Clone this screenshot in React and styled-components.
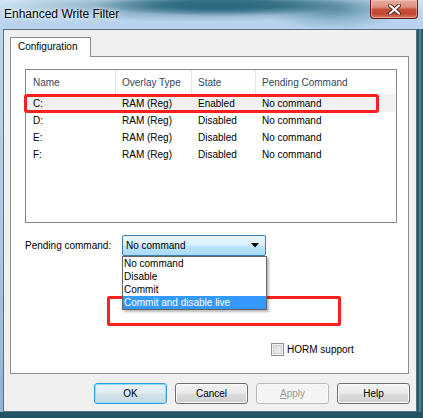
import styled, { createGlobalStyle } from "styled-components";

const Global = createGlobalStyle`
  html, body {
    margin: 0;
    padding: 0;
    background: #ffffff;
  }
  body {
    font-family: "Liberation Sans", Arial, sans-serif;
    font-size: 10px;
    color: #000;
  }
`;

const rows = [
  { name: "C:", type: "RAM (Reg)", state: "Enabled", cmd: "No command", selected: true },
  { name: "D:", type: "RAM (Reg)", state: "Disabled", cmd: "No command" },
  { name: "E:", type: "RAM (Reg)", state: "Disabled", cmd: "No command" },
  { name: "F:", type: "RAM (Reg)", state: "Disabled", cmd: "No command" },
];

const options = ["No command", "Disable", "Commit", "Commit and disable live"];

const App = () => {
  return (
    <>
      <Global />
      <Window>
        <TitleBar>
          <Title>Enhanced Write Filter</Title>
          <CloseButton>
            <svg width="13" height="11" viewBox="0 0 13 11">
              <path d="M2 1.5 L11 9.5 M11 1.5 L2 9.5" stroke="#4a2a26" strokeWidth="4" strokeLinecap="round" />
              <path d="M2 1.5 L11 9.5 M11 1.5 L2 9.5" stroke="#ffffff" strokeWidth="2.2" strokeLinecap="round" />
            </svg>
          </CloseButton>
        </TitleBar>

        <Client>
          <TabStrip>
            <Tab>Configuration</Tab>
          </TabStrip>
          <Panel>
            <ListView>
              <HeaderRow>
                <HeaderCell>Name</HeaderCell>
                <HeaderCell>Overlay Type</HeaderCell>
                <HeaderCell>State</HeaderCell>
                <HeaderCell last>Pending Command</HeaderCell>
              </HeaderRow>
              {rows.map((r, i) => (
                <Row key={`row-${i}`} selected={r.selected}>
                  <Cell>{r.name}</Cell>
                  <Cell>{r.type}</Cell>
                  <Cell>{r.state}</Cell>
                  <Cell>{r.cmd}</Cell>
                  {r.selected && <RowMark />}
                </Row>
              ))}
            </ListView>

            <PendingRow>
              <Label>Pending command:</Label>
              <Combo>
                <ComboText>No command</ComboText>
                <svg width="8" height="5" viewBox="0 0 8 5">
                  <polygon points="0,0 8,0 4,4.5" fill="#000" />
                </svg>
                <DropList>
                  {options.map((o, i) => (
                    <DropItem key={`opt-${i}`} active={i === options.length - 1}>
                      {o}
                    </DropItem>
                  ))}
                </DropList>
                <OptionMark />
              </Combo>
            </PendingRow>

            <CheckRow>
              <CheckBox />
              <span>HORM support</span>
            </CheckRow>
          </Panel>

          <ButtonRow>
            <Button variant="default">OK</Button>
            <Button>Cancel</Button>
            <Button variant="disabled">
              <u>A</u>pply
            </Button>
            <Button>Help</Button>
          </ButtonRow>
        </Client>
      </Window>
    </>
  );
};
export default App;

const Window = styled.div`
  width: 423px;
  height: 418px;
  display: flex;
  flex-direction: column;
  box-sizing: border-box;
  padding: 0 6px 6px 3px;
  background:
    linear-gradient(#1f5566, #1f5566) left bottom / 100% 6px no-repeat,
    linear-gradient(90deg, #274f5e 0, #2a6274 2px, #6f9fb4 3px, #2a6274 4px, #225a6b 100%) right top / 6px 100% no-repeat,
    linear-gradient(180deg, #bcd5ee 0%, #a8c7e4 60%, #8db3d3 100%);
`;

const TitleBar = styled.div`
  height: 29px;
  margin: 0 -6px 0 -3px;
  display: flex;
  align-items: flex-start;
  background:
    radial-gradient(130px 11px at 225px 5px, #2a687f 0%, rgba(42, 104, 127, 0.85) 45%, rgba(42, 104, 127, 0) 100%),
    radial-gradient(200px 16px at 200px 6px, rgba(60, 118, 140, 0.8) 0%, rgba(60, 118, 140, 0) 100%),
    radial-gradient(70px 20px at 335px 10px, rgba(80, 135, 160, 0.8) 0%, rgba(80, 135, 160, 0) 100%),
    linear-gradient(180deg, #d3e5f5 0%, #bdd6ee 45%, #b6d2ee 100%);
`;

const Title = styled.div`
  padding-left: 4px;
  line-height: 29px;
  font-size: 12px;
  color: #000;
  text-shadow: 0 0 6px rgba(255, 255, 255, 0.9), 0 0 3px rgba(255, 255, 255, 0.9);
`;

const CloseButton = styled.div`
  margin-left: auto;
  margin-right: 5px;
  width: 48px;
  height: 19px;
  box-sizing: border-box;
  display: flex;
  align-items: center;
  justify-content: center;
  border: 1px solid #5b2019;
  border-top: none;
  border-radius: 0 0 4px 4px;
  background: linear-gradient(180deg, #e7ab9e 0%, #dc8f7e 40%, #c8503b 52%, #c04532 75%, #d9775c 100%);
  box-shadow: inset 0 0 0 1px rgba(255, 210, 200, 0.45);
`;

const Client = styled.div`
  flex: 1;
  display: flex;
  flex-direction: column;
  background: #f0f0f0;
  border: 1px solid #5d6f7e;
  padding: 7px 0 0 6px;
`;

const TabStrip = styled.div`
  display: flex;
  position: relative;
  z-index: 1;
`;

const Tab = styled.div`
  width: 81px;
  height: 20px;
  box-sizing: border-box;
  margin-bottom: -1px;
  border: 1px solid #898c95;
  border-bottom: none;
  background: #ffffff;
  padding-left: 7px;
  line-height: 17px;
`;

const Panel = styled.div`
  width: 399px;
  height: 318px;
  box-sizing: border-box;
  border: 1px solid #898c95;
  background: #ffffff;
  padding: 12px 0 0 14px;
  position: relative;
`;

const ListView = styled.div`
  width: 372px;
  height: 154px;
  box-sizing: border-box;
  border: 1px solid #828790;
  background: #ffffff;
`;

const HeaderRow = styled.div`
  display: grid;
  grid-template-columns: 90px 76px 64px 1fr;
  height: 25px;
  background: linear-gradient(180deg, #ffffff 0%, #ffffff 60%, #f7f8fa 100%);
`;

const HeaderCell = styled.div`
  padding-left: 6px;
  line-height: 25px;
  color: #34465c;
  border-right: ${(p) => (p.last ? "none" : "1px solid #e3e7ec")};
  white-space: nowrap;
  &:first-child {
    padding-left: 7px;
  }
`;

const Row = styled.div`
  position: relative;
  display: grid;
  grid-template-columns: 90px 76px 64px 1fr;
  height: 17px;
  line-height: 17px;
  background: ${(p) => (p.selected ? "#f1f1f1" : "transparent")};
`;

const Cell = styled.div`
  padding-left: 6px;
  white-space: nowrap;
  &:first-child {
    padding-left: 7px;
  }
`;

const RowMark = styled.div`
  position: absolute;
  left: -2px;
  top: -1px;
  width: 355px;
  height: 19px;
  box-sizing: border-box;
  border: 3px solid #ff1f1f;
  border-radius: 3px;
`;

const PendingRow = styled.div`
  display: flex;
  align-items: center;
  margin-top: 12px;
`;

const Label = styled.div`
  width: 97px;
`;

const Combo = styled.div`
  position: relative;
  width: 144px;
  height: 21px;
  box-sizing: border-box;
  display: flex;
  align-items: center;
  padding: 0 6px 0 3px;
  border: 1px solid #3c7fb1;
  border-radius: 2px;
  background: linear-gradient(180deg, #eaf6fd 0%, #d9f0fc 48%, #bee6fd 52%, #a7d9f5 100%);
`;

const ComboText = styled.div`
  flex: 1;
`;

const DropList = styled.div`
  position: absolute;
  z-index: 2;
  left: -1px;
  top: 20px;
  width: 145px;
  box-sizing: border-box;
  border: 1px solid #646464;
  background: #ffffff;
  box-shadow: 2px 2px 2px rgba(0, 0, 0, 0.28);
`;

const DropItem = styled.div`
  height: 13px;
  line-height: 13px;
  padding-left: 1px;
  background: ${(p) => (p.active ? "#3399ff" : "transparent")};
  color: ${(p) => (p.active ? "#ffffff" : "#000000")};
  white-space: nowrap;
`;

const OptionMark = styled.div`
  position: absolute;
  z-index: 1;
  left: -16px;
  top: 60px;
  width: 234px;
  height: 30px;
  box-sizing: border-box;
  border: 3px solid #ff1f1f;
  border-radius: 2px;
`;

const CheckRow = styled.div`
  display: flex;
  align-items: center;
  gap: 3px;
  margin-top: 87px;
  padding-left: 246px;
`;

const CheckBox = styled.div`
  width: 13px;
  height: 13px;
  box-sizing: border-box;
  border: 1px solid #8e8f8f;
  background: linear-gradient(135deg, #d2d2d2 0%, #e6e6e6 50%, #f6f6f6 100%);
  box-shadow: inset 0 0 0 1px #f4f4f4, inset 0 0 0 2px #cfcfcf;
`;

const ButtonRow = styled.div`
  display: flex;
  justify-content: flex-end;
  gap: 8px;
  margin-top: 9px;
  padding-right: 6px;
`;

const Button = styled.div`
  width: 73px;
  height: 21px;
  box-sizing: border-box;
  display: flex;
  align-items: center;
  justify-content: center;
  border-radius: 3px;
  border: 1px solid ${(p) => (p.variant === "default" ? "#3c9ed8" : p.variant === "disabled" ? "#b6babd" : "#707070")};
  color: ${(p) => (p.variant === "disabled" ? "#9a9a9a" : "#000")};
  background: ${(p) =>
    p.variant === "disabled"
      ? "#f4f4f4"
      : p.variant === "default"
      ? "linear-gradient(180deg, #eaf3f8 0%, #e0ebf1 48%, #d2e2eb 52%, #c6d9e4 100%)"
      : "linear-gradient(180deg, #f2f2f2 0%, #ebebeb 48%, #dddddd 52%, #cfcfcf 100%)"};
  box-shadow: ${(p) => (p.variant === "default" ? "inset 0 0 0 1px #8fdcf8" : "inset 0 0 0 1px #fbfbfb")};
`;
